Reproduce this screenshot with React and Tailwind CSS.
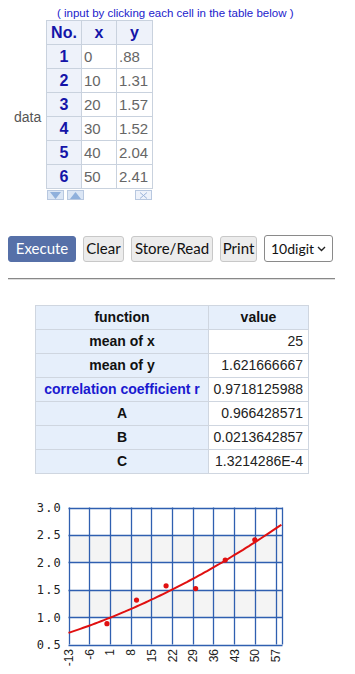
import React from "react"

const data = [
  [0, ".88"],
  [10, "1.31"],
  [20, "1.57"],
  [30, "1.52"],
  [40, "2.04"],
  [50, "2.41"],
]

const results = [
  ["mean of x", "25"],
  ["mean of y", "1.621666667"],
  ["correlation coefficient r", "0.9718125988", true],
  ["A", "0.966428571"],
  ["B", "0.0213642857"],
  ["C", "1.3214286E-4"],
]

const Chart = () => {
  const L = 68.5, T = 506.5, R = 282.5, B = 643.5
  const sx = v => L + (v + 13) * (20.7 / 7)
  const sy = v => B - (v - 0.5) * 54.8
  const xs = [-13, -6, 1, 8, 15, 22, 29, 36, 43, 50, 57]
  const ys = [0.5, 1.0, 1.5, 2.0, 2.5, 3.0]
  let d = ""
  for (let v = -13; v <= 59.5; v += 1) {
    const y = 0.966428571 + 0.0213642857 * v + 0.00013214286 * v * v
    d += (d ? " L" : "M") + sx(v).toFixed(1) + " " + sy(y).toFixed(1)
  }
  return (
    <svg width="355" height="184" viewBox="0 490 355 184" className="block">
      <rect x={L} y={sy(2.5)} width={R - L} height={sy(2.0) - sy(2.5)} fill="#f4f4f4" />
      <rect x={L} y={sy(1.5)} width={R - L} height={sy(1.0) - sy(1.5)} fill="#f4f4f4" />
      {xs.map(v => (
        <line key={v} x1={Math.round(sx(v)) + 0.5} x2={Math.round(sx(v)) + 0.5} y1={T} y2={B} stroke="#2f5fb0" strokeWidth="1.3" />
      ))}
      {ys.map(v => (
        <line key={v} x1={L} x2={R} y1={Math.round(sy(v)) + 0.5} y2={Math.round(sy(v)) + 0.5} stroke="#2f5fb0" strokeWidth="1.3" />
      ))}
      <line x1={R} x2={R} y1={T} y2={B} stroke="#2f5fb0" strokeWidth="1.3" />
      <path d={d} fill="none" stroke="#e01010" strokeWidth="2" />
      {data.map(([x, y]) => (
        <circle key={x} cx={sx(x)} cy={sy(parseFloat(y))} r="2.6" fill="#e01010" />
      ))}
      {ys.map(v => (
        <text key={v} x="62" y={sy(v) + 4.5} textAnchor="end" fontSize="12" letterSpacing="1.2" fill="#222" fontFamily="'DejaVu Sans Mono', monospace">
          {v.toFixed(1)}
        </text>
      ))}
      {xs.map(v => (
        <text key={v} transform={`translate(${sx(v) + 4.5} 648) rotate(-90)`} textAnchor="end" fontSize="12" fill="#222" fontFamily="'Liberation Sans', Arial, sans-serif">
          {v}
        </text>
      ))}
    </svg>
  )
}

const Btn = ({ children, className }) => (
  <button className={"h-[26px] rounded-[3px] border text-[15px] leading-none " + className}>
    {children}
  </button>
)

const cell = "h-[24px] p-0 leading-none border border-[#c9d2de]"

export default function App() {
  return (
    <div className="w-[355px] bg-white font-['Liberation_Sans',Arial,sans-serif]">
      <div className="pt-[7px] pl-[57px] text-[11.5px] leading-[12px] text-[#2222cc]">
        ( input by clicking each cell in the table below )
      </div>
      <div className="flex items-start mt-[1px]">
        <div className="w-[46px] pl-[14px] pt-[87px] text-[14px] text-[#555]">data</div>
        <div>
          <table className="border-collapse">
            <thead>
              <tr>
                <th className={cell + " w-[35px] bg-[#eef2fa] text-[16px] font-bold text-[#1414a8]"}>No.</th>
                <th className={cell + " w-[35px] bg-[#eef2fa] text-[16px] font-bold text-[#1414a8]"}>x</th>
                <th className={cell + " w-[36px] bg-[#eef2fa] text-[16px] font-bold text-[#1414a8]"}>y</th>
              </tr>
            </thead>
            <tbody>
              {data.map(([x, y], i) => (
                <tr key={i}>
                  <td className={cell + " bg-[#eef2fa] text-center text-[16px] font-bold text-[#1414a8]"}>{i + 1}</td>
                  <td className={cell + " pl-[2px] text-[15px] text-[#666]"}>{x}</td>
                  <td className={cell + " pl-[2px] text-[15px] text-[#666]"}>{y}</td>
                </tr>
              ))}
            </tbody>
          </table>
          <div className="flex items-center mt-[1px] w-[106px]">
            <div className="w-[17px] h-[10px] ml-[1px] border border-[#b8c8e0] bg-[#dbe6f5] flex items-center justify-center">
              <svg width="11" height="7" viewBox="0 0 11 7"><path d="M0 0 L11 0 L5.5 7 Z" fill="#8fb0dc" /></svg>
            </div>
            <div className="w-[17px] h-[10px] ml-[3px] border border-[#b8c8e0] bg-[#dbe6f5] flex items-center justify-center">
              <svg width="11" height="7" viewBox="0 0 11 7"><path d="M0 7 L11 7 L5.5 0 Z" fill="#8fb0dc" /></svg>
            </div>
            <div className="w-[17px] h-[10px] ml-auto border border-[#b8c8e0] bg-[#eef2fa] flex items-center justify-center">
              <svg width="9" height="7" viewBox="0 0 9 7"><path d="M1 0.5 L8 6.5 M8 0.5 L1 6.5" stroke="#9ab4da" strokeWidth="1" /></svg>
            </div>
          </div>
        </div>
      </div>

      <div className="flex items-center gap-[7px] pl-[8px] mt-[35px] font-['Lato',sans-serif]">
        <Btn className="w-[68px] bg-[#5670a8] border-[#5670a8] text-white">Execute</Btn>
        <Btn className="w-[41px] bg-[#ececec] border-[#c8c8c8] text-[#111]">Clear</Btn>
        <Btn className="w-[82px] bg-[#ececec] border-[#c8c8c8] text-[#111]">Store/Read</Btn>
        <Btn className="w-[37px] bg-[#ececec] border-[#c8c8c8] text-[#111]">Print</Btn>
        <div className="w-[69px] h-[27px] rounded-[3px] border border-[#8a8a8a] bg-white flex items-center justify-between pl-[6px] pr-[6px] text-[14px] text-[#111]">
          <span>10digit</span>
          <svg width="9" height="6" viewBox="0 0 9 6"><path d="M1 1 L4.5 4.5 L8 1" fill="none" stroke="#222" strokeWidth="1.4" /></svg>
        </div>
      </div>

      <div className="ml-[8px] mt-[16px] w-[327px] h-[2px] bg-[#888] border-b border-[#ddd]" />

      <table className="ml-[35px] mt-[25px] border-collapse text-[14px] font-bold table-fixed w-[273px]">
        <thead>
          <tr className="h-[24px]">
            <th className="w-[173px] p-0 border border-[#cfd6e0] bg-[#e6effb] text-[#111]">function</th>
            <th className="w-[100px] p-0 border border-[#cfd6e0] bg-[#e6effb] text-[#111]">value</th>
          </tr>
        </thead>
        <tbody>
          {results.map(([k, v, blue]) => (
            <tr key={k} className="h-[24px]">
              <td className={"p-0 border border-[#cfd6e0] bg-[#e6effb] text-center whitespace-nowrap " + (blue ? "text-[#1a1ad0]" : "text-[#111]")}>{k}</td>
              <td className="p-0 border border-[#cfd6e0] bg-white text-right pr-[5px] font-normal text-[#222]">{v}</td>
            </tr>
          ))}
        </tbody>
      </table>

      <div className="mt-[17px]">
        <Chart />
      </div>
    </div>
  )
}
